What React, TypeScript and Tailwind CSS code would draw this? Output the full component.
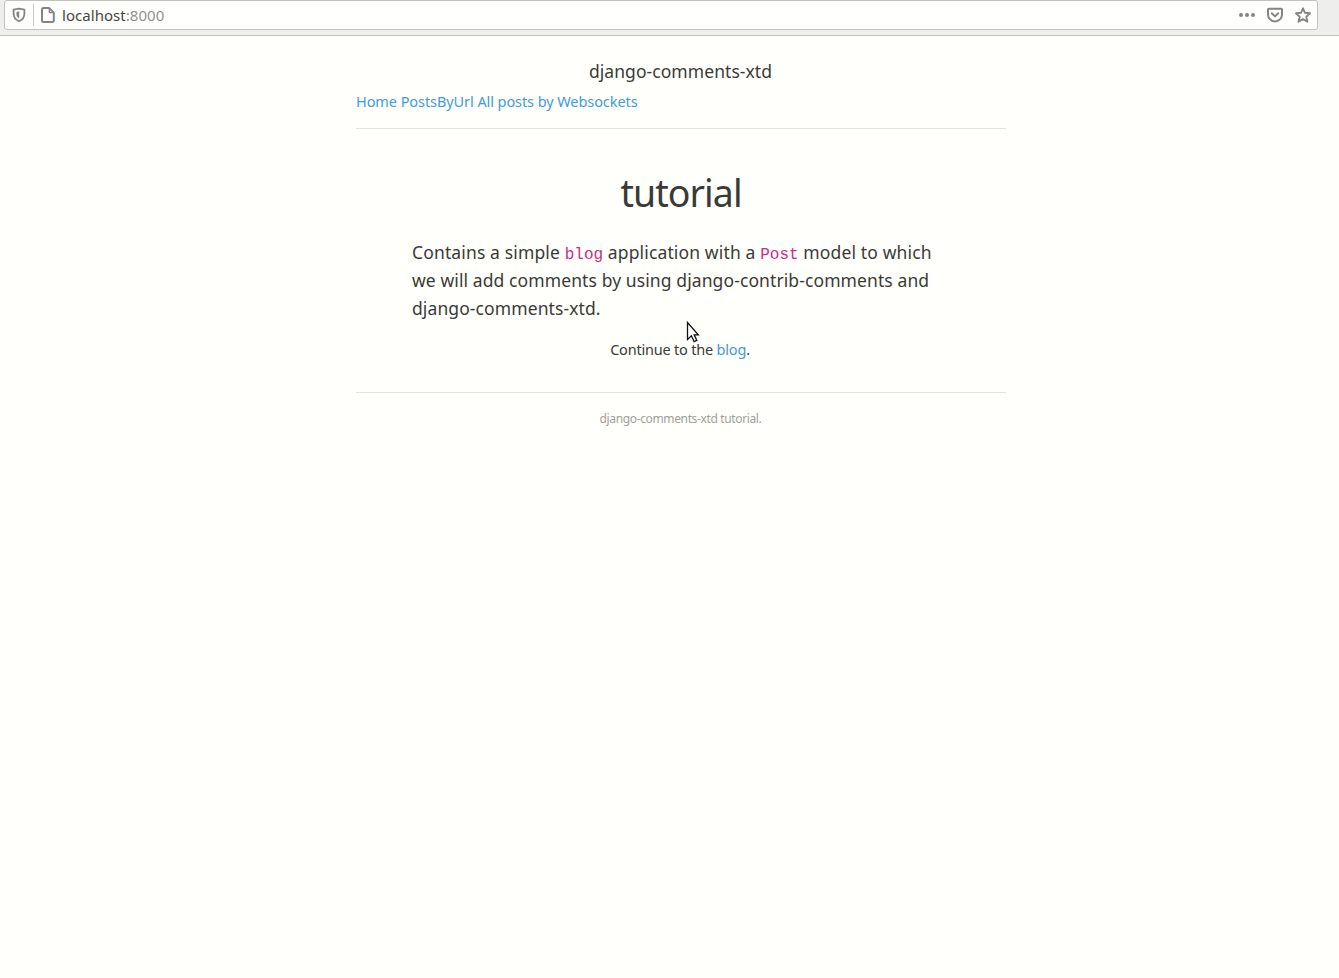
import React from "react";

function Shield() {
  return (
    <svg width="14" height="16" viewBox="0 0 14 16" fill="none" stroke="#858580" strokeWidth="1.8">
      <path d="M7 1.700 12.400 2.700v4c0 3.700-2 6-5.400 7.500C3.600 12.700 1.600 10.400 1.600 6.700v-4Z" strokeLinejoin="round" />
      <path d="M7.200 4.300 4.500 4.900v2.300c0 2 .9 3.300 2.700 4.400Z" fill="#858580" stroke="none" />
    </svg>
  );
}

function PageIcon() {
  return (
    <svg width="14" height="16" viewBox="0 0 14 16" fill="none" stroke="#858580" strokeWidth="2" strokeLinejoin="round">
      <path d="M2.500 1.100h5.800l4.500 4.500v7.800a1.500 1.500 0 0 1-1.500 1.500H2.500A1.500 1.500 0 0 1 1 13.400V2.600a1.500 1.500 0 0 1 1.500-1.500Z" />
      <path d="M8.300 1.100v4.500h4.500" strokeWidth="1.300" />
    </svg>
  );
}

function AddressBar() {
  return (
    <header className="h-9 border-b border-[#c3c3be] bg-[#eeeeec] pl-1 font-['Noto_Sans',sans-serif]">
      <div className="flex h-[30px] w-[1314px] items-center rounded-[3px] border border-[#c3c3bd] bg-[#fffffd]">
        <span className="ml-[7px]"><Shield /></span>
        <span className="ml-[7px] h-[22px] w-px bg-[#c8c8c4]" />
        <span className="ml-[7px]"><PageIcon /></span>
        <span className="ml-[7px] whitespace-nowrap pb-px text-[15px] leading-5 tracking-[0.04px] text-[#45453f]">
          localhost<span className="text-[#92928d]">:8000</span>
        </span>
        <span className="ml-auto mr-[6px] flex items-center gap-3">
          <svg width="16" height="16" viewBox="0 0 16 16" fill="#858580">
            <circle cx="2" cy="8" r="2" /><circle cx="8" cy="8" r="2" /><circle cx="14" cy="8" r="2" />
          </svg>
          <svg width="16" height="16" viewBox="0 0 16 16" fill="none" stroke="#858580" strokeWidth="2" strokeLinecap="round" strokeLinejoin="round">
            <path d="M1.800 1.800h12.400a.8.8 0 0 1 .8.8v4.800a7 7 0 0 1-14 0V2.600a.8.8 0 0 1 .8-.8Z" />
            <path d="M4.800 6.300 8 9.400l3.200-3.100" />
          </svg>
          <svg width="16" height="16" viewBox="0 0 16 16" fill="none" stroke="#858580" strokeWidth="1.900" strokeLinejoin="round">
            <path d="m8 1.300 2 4.500 5 .5-3.700 3.400 1.100 5L8 12.200l-4.400 2.500 1.100-5L1 6.300l5-.5Z" />
          </svg>
        </span>
      </div>
    </header>
  );
}

export default function App() {
  return (
    <div className="relative h-[978px] w-[1339px] overflow-hidden bg-[#fffffb] font-['Noto_Sans',sans-serif] text-[#3a3a37]">
      <AddressBar />
      <main className="ml-[356px] w-[650px]">
        <div className="border-b border-[#e2e2de] pt-[21px] pb-[15px]">
          <p className="pr-px text-center text-[17.500px] leading-7 tracking-[0.06px]">django-comments-xtd</p>
          <nav className="mt-1 whitespace-nowrap text-[14.500px] leading-6 tracking-[-0.08px] text-[#3d9be0]">
            <a>Home</a> <a>PostsByUrl</a> <a>All posts by Websockets</a>
          </nav>
        </div>
        <h1 className="mt-10 text-center text-[37.500px] leading-[48px] tracking-[-0.95px]">tutorial</h1>
        <div className="mt-[21px] ml-14 whitespace-nowrap text-[17.500px] leading-7 tracking-[0.1px]">
          <p className="h-7 tracking-[0.14px]">Contains a simple <code className="font-['Liberation_Mono',monospace] text-[16px] tracking-normal text-[#c92c86]">blog</code> application with a <code className="font-['Liberation_Mono',monospace] text-[16px] tracking-normal text-[#c92c86]">Post</code> model to which</p>
          <p className="h-7">we will add comments by using django-contrib-comments and</p>
          <p className="h-7">django-comments-xtd.</p>
        </div>
        <p className="mt-[15px] pr-[2px] text-center text-[14.500px] leading-6 tracking-[-0.2px]">Continue to the <a className="text-[#3d9be0]">blog</a>.</p>
        <footer className="mt-[31px] border-t border-[#e2e2de] pt-4 pr-px text-center text-[12px] leading-5 tracking-[-0.36px] text-[#a0a09c]">django-comments-xtd tutorial.</footer>
      </main>
      <svg className="absolute left-[686px] top-[321px]" width="14" height="23" viewBox="0 0 14 23">
        <path d="M1.500 1.500v17l3.900-3.700 2.700 5.800 2.700-1.200-2.600-5.600h4.100Z" fill="#fff" stroke="#111" strokeWidth="1.300" />
      </svg>
    </div>
  );
}
